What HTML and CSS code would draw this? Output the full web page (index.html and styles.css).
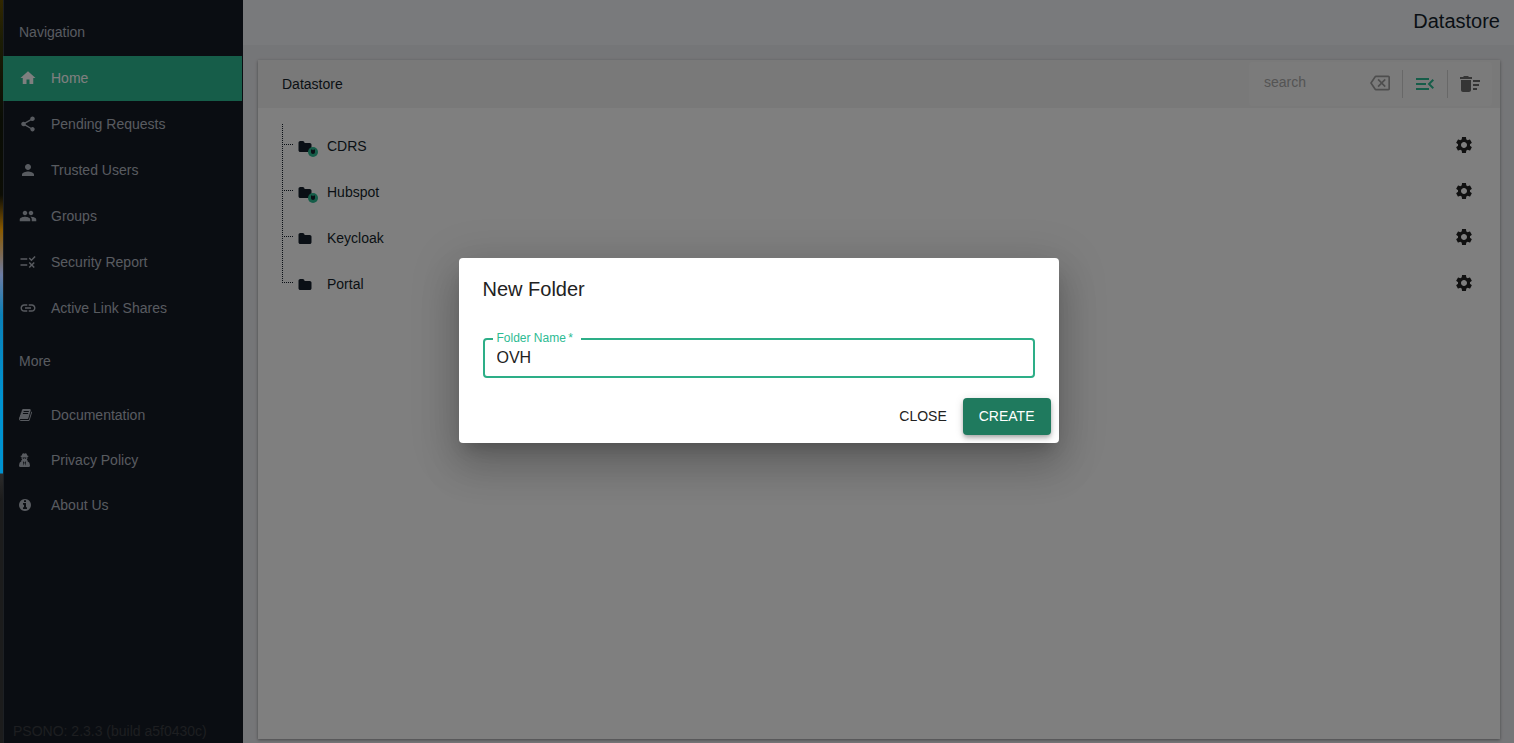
FILE: index.html
```html
<!DOCTYPE html>
<html lang="en">
<head>
  <meta charset="UTF-8" />
  <meta name="viewport" content="width=device-width, initial-scale=1.0"/>
  <title>Datastore</title>
  <link rel="stylesheet" href="styles.css">
</head>
<body>

  <!-- Shared icons -->
  <svg class="sprite" aria-hidden="true">
    <symbol id="icon-gear" viewBox="0 0 24 24">
      <path d="M19.14 12.94c.04-.3.06-.61.06-.94 0-.32-.02-.64-.07-.94l2.03-1.58c.18-.14.23-.41.12-.61l-1.92-3.32c-.12-.22-.37-.29-.59-.22l-2.39.96c-.5-.38-1.03-.7-1.62-.94l-.36-2.54c-.04-.24-.24-.41-.48-.41h-3.84c-.24 0-.43.17-.47.41l-.36 2.54c-.59.24-1.13.57-1.62.94l-2.39-.96c-.22-.08-.47 0-.59.22L2.74 8.87c-.12.21-.08.47.12.61l2.03 1.58c-.05.3-.09.63-.09.94s.02.64.07.94l-2.03 1.58c-.18.14-.23.41-.12.61l1.92 3.32c.12.22.37.29.59.22l2.39-.96c.5.38 1.03.7 1.62.94l.36 2.54c.05.24.24.41.48.41h3.84c.24 0 .44-.17.47-.41l.36-2.54c.59-.24 1.13-.56 1.62-.94l2.39.96c.22.08.47 0 .59-.22l1.92-3.32c.12-.22.07-.47-.12-.61l-2.01-1.58zM12 15.6c-1.98 0-3.6-1.62-3.6-3.6s1.62-3.6 3.6-3.6 3.6 1.62 3.6 3.6-1.62 3.6-3.6 3.6z"/>
    </symbol>
    <symbol id="icon-folder" viewBox="0 0 1792 1792">
      <path d="M1728 608v704q0 92-66 158t-158 66h-1216q-92 0-158-66t-66-158v-960q0-92 66-158t158-66h320q92 0 158 66t66 158v32h672q92 0 158 66t66 158z"/>
    </symbol>
    <symbol id="icon-shared" viewBox="0 0 10 10">
      <circle cx="5" cy="5" r="5" fill="#2dbb93"/>
      <path d="M3 2.500h1.200l.8.700.8-.7H7v2.700q0 1.600-2 1.700-2-.1-2-1.700z"/>
    </symbol>
  </svg>

  <div class="edge"></div>

  <div class="app">
    <aside class="sidebar">
      <h2 class="nav-title">Navigation</h2>
      <nav class="nav-main">
        <a href="#" class="nav-link active">
          <svg class="nav-icon" viewBox="0 0 24 24"><path d="M10 20v-6h4v6h5v-8h3L12 3 2 12h3v8z"/></svg>
          Home
        </a>
        <a href="#" class="nav-link">
          <svg class="nav-icon" viewBox="0 0 24 24"><path d="M18 16.08c-.76 0-1.44.3-1.96.77L8.91 12.7c.05-.23.09-.46.09-.7s-.04-.47-.09-.7l7.05-4.11c.54.5 1.25.81 2.04.81 1.66 0 3-1.34 3-3s-1.34-3-3-3-3 1.34-3 3c0 .24.04.47.09.7L8.04 9.81C7.5 9.31 6.79 9 6 9c-1.66 0-3 1.34-3 3s1.34 3 3 3c.79 0 1.5-.31 2.04-.81l7.12 4.16c-.05.21-.08.43-.08.65 0 1.61 1.31 2.92 2.92 2.92s2.92-1.31 2.92-2.92-1.31-2.92-2.92-2.92z"/></svg>
          Pending Requests
        </a>
        <a href="#" class="nav-link">
          <svg class="nav-icon" viewBox="0 0 24 24"><path d="M12 12c2.21 0 4-1.79 4-4s-1.79-4-4-4-4 1.79-4 4 1.79 4 4 4zm0 2c-2.67 0-8 1.34-8 4v2h16v-2c0-2.66-5.33-4-8-4z"/></svg>
          Trusted Users
        </a>
        <a href="#" class="nav-link">
          <svg class="nav-icon" viewBox="0 0 24 24"><path d="M16 11c1.66 0 2.99-1.34 2.99-3S17.66 5 16 5c-1.66 0-3 1.34-3 3s1.34 3 3 3zm-8 0c1.66 0 2.99-1.34 2.99-3S9.66 5 8 5C6.34 5 5 6.34 5 8s1.34 3 3 3zm0 2c-2.33 0-7 1.17-7 3.5V19h14v-2.5c0-2.33-4.67-3.5-7-3.5zm8 0c-.29 0-.62.02-.97.05 1.16.84 1.97 1.97 1.97 3.45V19h6v-2.5c0-2.33-4.67-3.5-7-3.5z"/></svg>
          Groups
        </a>
        <a href="#" class="nav-link">
          <svg class="nav-icon" viewBox="0 0 24 24"><path d="M16.54 11L13 7.46l1.41-1.41 2.12 2.12 4.24-4.24 1.41 1.41L16.54 11zM11 7H2v2h9V7zm10 6.41L19.59 12 17 14.59 14.41 12 13 13.41 15.59 16 13 18.59 14.41 20 17 17.41 19.59 20 21 18.59 18.41 16 21 13.41zM11 15H2v2h9v-2z"/></svg>
          Security Report
        </a>
        <a href="#" class="nav-link">
          <svg class="nav-icon" viewBox="0 0 24 24"><path d="M3.9 12c0-1.71 1.39-3.1 3.1-3.1h4V7H7c-2.76 0-5 2.24-5 5s2.24 5 5 5h4v-1.9H7c-1.71 0-3.1-1.39-3.1-3.1zM8 13h8v-2H8v2zm9-6h-4v1.9h4c1.71 0 3.1 1.39 3.1 3.1s-1.39 3.1-3.1 3.1h-4V17h4c2.76 0 5-2.24 5-5s-2.24-5-5-5z"/></svg>
          Active Link Shares
        </a>
      </nav>

      <h2 class="nav-title">More</h2>
      <nav class="nav-more">
        <a href="#" class="nav-link">
          <svg class="nav-icon small" viewBox="64 0 1792 1792"><path d="M1703 478q40 57 18 129l-275 906q-19 64-76.500 107.500t-122.500 43.500h-923q-77 0-148.500-53.500t-99.500-131.500q-24-67-2-127 0-4 3-27t4-37q1-8-3-21.500t-3-19.500q2-11 8-21t16.500-23.500 16.500-23.500q23-38 45-91.500t30-91.500q3-10 .5-30t-.5-28q3-11 17-28t17-23q21-36 42-92t25-90q1-9-2.500-32t.5-28q4-13 22-30.500t22-22.500q19-26 42.500-84.500t27.500-96.500q1-8-3-25.500t-2-26.500q2-8 9-18t18-23 17-21q8-12 16.500-30.500t15-35 16-36 19.500-32 26.500-23.500 36-11.500 47.500 5.500l-1 3q38-9 51-9h761q74 0 114 56t18 130l-274 906q-36 119-71.500 153.500t-128.500 34.500h-869q-27 0-38 15-11 16-1 43 24 70 144 70h923q29 0 56-15.500t35-41.500l300-987q7-22 5-57 38 15 59 43zm-1064 2q-4 13 2 22.500t20 9.500h608q13 0 25.500-9.500t16.500-22.500l21-64q4-13-2-22.500t-20-9.500h-608q-13 0-25.500 9.500t-16.500 22.500zm-83 256q-4 13 2 22.500t20 9.500h608q13 0 25.500-9.500t16.500-22.500l21-64q4-13-2-22.500t-20-9.500h-608q-13 0-25.500 9.500t-16.500 22.500z"/></svg>
          Documentation
        </a>
        <a href="#" class="nav-link">
          <svg class="nav-icon small" viewBox="0 0 14 14"><path fill-rule="evenodd" d="M3.300.9q.6-.9 1.200-.6l1 .4 1-.4q.7-.3 1.200.6l.5 1.700q1.300.3 1.300.7t-1.100.7q.4 1.800-.7 2.900l1.100.5-.3.900q2.500.9 2.500 4.200 0 1.500-1.400 1.500H1.400Q0 14 0 12.500q0-3.300 2.400-4.200l-.4-.9 1.200-.5Q2.200 5.700 2.600 4 1.500 3.700 1.500 3.300t1.300-.7zM3.500 4.500v.6q.3.700 1.100.6.600-.1.800-.6h.2q.2.500.8.6.8.1 1.100-.6v-.6zM3.900 8l.8 4.700.6-3.100zM7.100 8l-1.400 1.600.6 3.100z"/></svg>
          Privacy Policy
        </a>
        <a href="#" class="nav-link">
          <svg class="nav-icon small" viewBox="128 0 1792 1792"><path d="M1152 1376v-160q0-14-9-23t-23-9h-96v-512q0-14-9-23t-23-9h-320q-14 0-23 9t-9 23v160q0 14 9 23t23 9h96v320h-96q-14 0-23 9t-9 23v160q0 14 9 23t23 9h448q14 0 23-9t9-23zm-128-896v-160q0-14-9-23t-23-9h-192q-14 0-23 9t-9 23v160q0 14 9 23t23 9h192q14 0 23-9t9-23zm640 416q0 209-103 385.500t-279.500 279.500-385.500 103-385.500-103-279.500-279.500-103-385.500 103-385.500 279.500-279.500 385.500-103 385.500 103 279.500 279.500 103 385.500z"/></svg>
          About Us
        </a>
      </nav>

      <p class="version">PSONO: 2.3.3 (build a5f0430c)</p>
    </aside>

    <div class="page">
      <header class="top-bar">
        <h1>Datastore</h1>
      </header>

      <main class="content">
        <section class="panel">
          <div class="panel-header">
            <h2>Datastore</h2>
            <div class="toolbar">
              <input type="text" class="search" placeholder="search" aria-label="search">
              <button class="icon-btn clear" aria-label="Clear search">
                <svg width="20" height="20" viewBox="0 0 24 24"><path d="M22 3H7c-.69 0-1.230.35-1.590.88L0 12l5.410 8.110c.36.530.9.890 1.590.890h15c1.100 0 2-.9 2-2V5c0-1.100-.9-2-2-2zm0 16H7.070L2.400 12l4.660-7H22v14zm-11.590-2L14 13.410 17.590 17 19 15.590 15.410 12 19 8.410 17.590 7 14 10.590 10.410 7 9 8.410 12.590 12 9 15.590z"/></svg>
              </button>
              <button class="icon-btn menu" aria-label="Actions">
                <svg width="24" height="24" viewBox="0 0 24 24"><path d="M3 18h13v-2H3v2zm0-5h10v-2H3v2zm0-7v2h13V6H3zm18 9.590L17.420 12 21 8.410 19.590 7l-5 5 5 5L21 15.590z"/></svg>
              </button>
              <button class="icon-btn trash" aria-label="Trash">
                <svg width="24" height="24" viewBox="0 0 24 24"><path d="M15 16h4v2h-4zm0-8h7v2h-7zm0 4h6v2h-6zM3 18c0 1.100.9 2 2 2h6c1.100 0 2-.9 2-2V8H3v10zM14 5h-3l-1-1H6L5 5H2v2h12z"/></svg>
              </button>
            </div>
          </div>

          <ul class="tree">
            <li>
              <span class="folder">
                <svg class="folder-icon"><use href="#icon-folder"/></svg>
                <svg class="shared-badge"><use href="#icon-shared"/></svg>
              </span>
              <span class="name">CDRS</span>
              <button class="gear" aria-label="CDRS settings"><svg width="20" height="20"><use href="#icon-gear"/></svg></button>
            </li>
            <li>
              <span class="folder">
                <svg class="folder-icon"><use href="#icon-folder"/></svg>
                <svg class="shared-badge"><use href="#icon-shared"/></svg>
              </span>
              <span class="name">Hubspot</span>
              <button class="gear" aria-label="Hubspot settings"><svg width="20" height="20"><use href="#icon-gear"/></svg></button>
            </li>
            <li>
              <span class="folder"><svg class="folder-icon"><use href="#icon-folder"/></svg></span>
              <span class="name">Keycloak</span>
              <button class="gear" aria-label="Keycloak settings"><svg width="20" height="20"><use href="#icon-gear"/></svg></button>
            </li>
            <li>
              <span class="folder"><svg class="folder-icon"><use href="#icon-folder"/></svg></span>
              <span class="name">Portal</span>
              <button class="gear" aria-label="Portal settings"><svg width="20" height="20"><use href="#icon-gear"/></svg></button>
            </li>
          </ul>
        </section>
      </main>
    </div>

    <!-- Modal -->
    <div class="backdrop">
      <form class="modal" role="dialog" aria-labelledby="modalTitle">
        <h2 id="modalTitle">New Folder</h2>
        <div class="field">
          <label for="folderName">Folder Name&thinsp;*</label>
          <input type="text" id="folderName" value="OVH" required>
        </div>
        <div class="actions">
          <button type="button" class="btn">CLOSE</button>
          <button type="submit" class="btn btn-primary">CREATE</button>
        </div>
      </form>
    </div>
  </div>

</body>
</html>
```
FILE: styles.css
```css
* {
  box-sizing: border-box;
  margin: 0;
  padding: 0;
}

body {
  display: flex;
  min-height: 100vh;
  font-family: "Liberation Sans", Arial, Helvetica, sans-serif;
  font-size: 14px;
  line-height: 20px;
  color: #151f2b;
  background-color: #ebecf0;
}

h1, h2 {
  font-weight: normal;
}

button, input {
  font-family: inherit;
  font-size: inherit;
  border: none;
  background: none;
}

button {
  cursor: pointer;
}

svg {
  display: block;
  fill: currentColor;
}

.sprite {
  position: absolute;
  width: 0;
  height: 0;
}

/* sliver of desktop left of the app */
.edge {
  width: 3px;
  background: linear-gradient(#332800 0, #1c1d05 40px, #0a0d05 120px, #0c0d05 195px, #8a5a00 230px, #7d6a55 255px, #6c7ca5 275px, #0a80b8 315px, #0092d0 400px, #0092d0 473px, #2b2b2b 474px, #1c1c1c 500px);
}

.app {
  position: relative;
  flex: 1;
  display: flex;
}

/* Sidebar */
.sidebar {
  display: flex;
  flex-direction: column;
  width: 240px;
  padding-right: 1px;
  color: #b1b6c1;
  background-color: #151b24;
  box-shadow: inset 1px 0 #3a4048;
}

.nav-title {
  padding: 22px 16px 14px;
  font-size: 14px;
}

.nav-main {
  display: grid;
  gap: 1px;
}

.nav-main + .nav-title {
  padding: 20px 16px 22px;
}

.nav-link {
  display: flex;
  align-items: center;
  height: 45px;
  padding: 0 16px 2px;
  color: inherit;
  text-decoration: none;
}

.nav-link.active {
  color: #fff;
  background-color: #2dbb93;
}

.nav-icon {
  width: 18px;
  height: 18px;
  margin-right: 14px;
}

.nav-icon.small {
  width: 14px;
  height: 14px;
  margin-right: 18px;
}

.version {
  margin-top: auto;
  padding: 0 10px 2px;
  color: #3a3d42;
}

/* Page */
.page {
  flex: 1;
  display: flex;
  flex-direction: column;
}

.top-bar {
  display: flex;
  justify-content: flex-end;
  height: 45px;
  padding: 7px 14px;
  background-color: #f2f5f9;
}

.top-bar h1 {
  font-size: 20px;
  line-height: 28px;
}

.content {
  flex: 1;
  display: flex;
  padding: 15px 14px 4px 15px;
}

.panel {
  flex: 1;
  background-color: #fff;
  box-shadow: 0 1px 3px rgba(0,0,0,0.4);
}

.panel-header {
  display: flex;
  align-items: center;
  justify-content: space-between;
  height: 48px;
  padding: 0 8px 0 24px;
  background-color: #f2f2f2;
}

.panel-header h2 {
  font-size: 14px;
}

.toolbar {
  display: flex;
  align-items: center;
  height: 44px;
  border-radius: 4px;
  background-color: #f7f7f7;
}

.search {
  width: 108px;
  height: 44px;
  padding: 0 0 4px 15px;
}

.search::placeholder {
  color: #a9a9a9;
}

.icon-btn {
  display: flex;
  align-items: center;
  justify-content: center;
  width: 45px;
  height: 28px;
}

.icon-btn + .icon-btn {
  border-left: 1px solid #d0d0d0;
}

.clear {
  padding-bottom: 2px;
  color: #9c9c9c;
}

.menu {
  color: #2dbb93;
}

.trash {
  color: #6a6a6a;
}

/* Folder tree */
.tree {
  display: grid;
  gap: 2px;
  padding: 16px 24px;
  list-style: none;
}

.tree li {
  position: relative;
  display: flex;
  align-items: center;
  height: 44px;
  padding-left: 16px;
}

/* dotted guide lines */
.tree li::before {
  content: "";
  position: absolute;
  left: 0;
  top: 0;
  width: 1px;
  height: 46px;
  background: repeating-linear-gradient(#151f2b 0 1px, transparent 1px 2px);
}

.tree li:last-child::before {
  height: 20px;
}

.tree li::after {
  content: "";
  position: absolute;
  left: 0;
  top: 20px;
  width: 12px;
  height: 1px;
  background: repeating-linear-gradient(90deg, #151f2b 0 1px, transparent 1px 2px);
}

.folder {
  position: relative;
  width: 29px;
  padding-top: 2px;
}

.folder-icon {
  width: 14px;
  height: 14px;
}

.shared-badge {
  position: absolute;
  left: 10px;
  top: 9px;
  width: 10px;
  height: 10px;
}

.gear {
  margin-left: auto;
  padding: 0 2px 2px;
  color: #222;
}

/* Modal */
.backdrop {
  position: absolute;
  inset: 0;
  display: flex;
  align-items: center;
  justify-content: center;
  padding-bottom: 42px;
  background-color: rgba(0,0,0,0.5);
}

.modal {
  width: 90%;
  max-width: 600px;
  border-radius: 4px;
  color: #222;
  background-color: #fff;
  box-shadow: 0 11px 15px -7px rgba(0,0,0,0.2), 0 24px 38px 3px rgba(0,0,0,0.14), 0 9px 46px 8px rgba(0,0,0,0.12);
}

.modal h2 {
  padding: 15px 24px 17px;
  font-size: 20px;
  line-height: 32px;
}

.field {
  position: relative;
  padding: 16px 24px 12px;
}

.field label {
  position: absolute;
  left: 34px;
  top: 8px;
  padding: 0 8px 0 4px;
  font-size: 12px;
  line-height: 16px;
  color: #2dbb93;
  background-color: #fff;
}

.field input {
  display: block;
  width: 100%;
  height: 40px;
  padding: 0 12px;
  font-size: 16px;
  color: #222;
  border: 2px solid #2dae87;
  border-radius: 4px;
  outline: none;
}

.actions {
  display: flex;
  justify-content: flex-end;
  gap: 8px;
  padding: 8px;
}

.btn {
  height: 37px;
  padding: 0 8px 2px;
  color: #222;
  border-radius: 4px;
}

.btn-primary {
  padding: 0 16px 2px;
  color: #fff;
  background-color: #1f7a5e;
  box-shadow: 0 2px 4px -1px rgba(0,0,0,0.2), 0 4px 5px rgba(0,0,0,0.14), 0 1px 10px rgba(0,0,0,0.12);
}
```
